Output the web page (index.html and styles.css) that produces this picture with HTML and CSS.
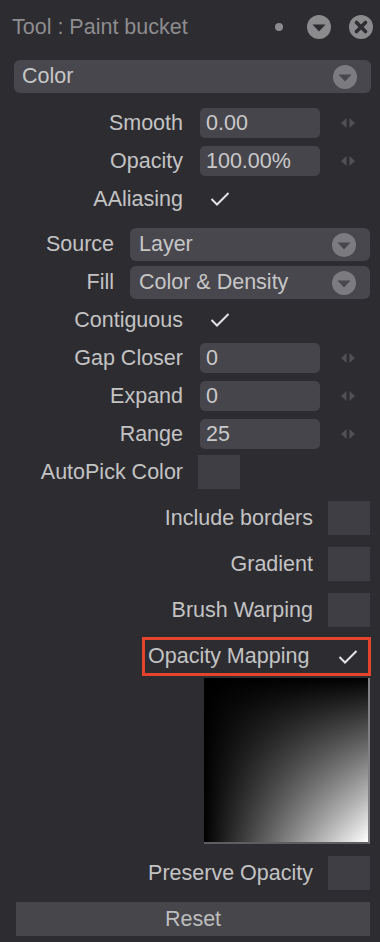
FILE: index.html
```html
<!DOCTYPE html>
<html>
<head>
<meta charset="utf-8">
<link rel="stylesheet" href="styles.css">
</head>
<body>
<div class="panel">
  <div class="header">
    <span class="title">Tool : Paint bucket</span>
    <span class="dot"></span>
    <svg class="hicon" width="24" height="24" viewBox="0 0 24 24"><circle cx="12" cy="12" r="12" fill="#8b8b8d"/><path d="M5.5 9.5 H18.5 L12 16.5 Z" fill="#2d2c31"/></svg>
    <svg class="hicon close" width="24" height="24" viewBox="0 0 24 24"><circle cx="12" cy="12" r="12" fill="#8b8b8d"/><path d="M7.5 7.5 L16.5 16.5 M16.5 7.5 L7.5 16.5" stroke="#2d2c31" stroke-width="3.6" stroke-linecap="round"/></svg>
  </div>

  <div class="select main-select">
    <span>Color</span>
    <svg class="sicon" width="24" height="24" viewBox="0 0 24 24"><circle cx="12" cy="12" r="12" fill="#7c7b7f"/><path d="M5.5 9.5 H18.5 L12 16.5 Z" fill="#48474d"/></svg>
  </div>

  <div class="grid g1">
    <span class="label">Smooth</span>
    <div class="field">0.00</div>
    <svg class="arrows" width="16" height="12" viewBox="0 0 16 12"><path d="M1 6 L6.5 1 V11 Z M15 6 L9.5 1 V11 Z" fill="#515055"/></svg>

    <span class="label">Opacity</span>
    <div class="field">100.00%</div>
    <svg class="arrows" width="16" height="12" viewBox="0 0 16 12"><path d="M1 6 L6.5 1 V11 Z M15 6 L9.5 1 V11 Z" fill="#515055"/></svg>

    <span class="label">AAliasing</span>
    <div class="checkcell"><svg width="20" height="16" viewBox="0 0 20 16"><path d="M1.5 8 L7 13.5 L18.5 2" fill="none" stroke="#e4e4e4" stroke-width="2"/></svg></div>
    <span></span>
  </div>

  <div class="grid g2">
    <span class="label">Source</span>
    <div class="select"><span>Layer</span><svg class="sicon" width="24" height="24" viewBox="0 0 24 24"><circle cx="12" cy="12" r="12" fill="#7c7b7f"/><path d="M5.5 9.5 H18.5 L12 16.5 Z" fill="#48474d"/></svg></div>
    <span class="label">Fill</span>
    <div class="select"><span>Color &amp; Density</span><svg class="sicon" width="24" height="24" viewBox="0 0 24 24"><circle cx="12" cy="12" r="12" fill="#7c7b7f"/><path d="M5.5 9.5 H18.5 L12 16.5 Z" fill="#48474d"/></svg></div>
  </div>

  <div class="grid g3">
    <span class="label">Contiguous</span>
    <div class="checkcell"><svg width="20" height="16" viewBox="0 0 20 16"><path d="M1.5 8 L7 13.5 L18.5 2" fill="none" stroke="#e4e4e4" stroke-width="2"/></svg></div>
    <span></span>

    <span class="label">Gap Closer</span>
    <div class="field">0</div>
    <svg class="arrows" width="16" height="12" viewBox="0 0 16 12"><path d="M1 6 L6.5 1 V11 Z M15 6 L9.5 1 V11 Z" fill="#515055"/></svg>

    <span class="label">Expand</span>
    <div class="field">0</div>
    <svg class="arrows" width="16" height="12" viewBox="0 0 16 12"><path d="M1 6 L6.5 1 V11 Z M15 6 L9.5 1 V11 Z" fill="#515055"/></svg>

    <span class="label">Range</span>
    <div class="field">25</div>
    <svg class="arrows" width="16" height="12" viewBox="0 0 16 12"><path d="M1 6 L6.5 1 V11 Z M15 6 L9.5 1 V11 Z" fill="#515055"/></svg>

    <span class="label">AutoPick Color</span>
    <div class="box autopick"></div>
    <span></span>
  </div>

  <div class="right-group">
    <div class="rrow"><span class="label">Include borders</span><div class="box"></div></div>
    <div class="rrow"><span class="label">Gradient</span><div class="box"></div></div>
    <div class="rrow"><span class="label">Brush Warping</span><div class="box"></div></div>
  </div>

  <div class="highlight">
    <span class="label">Opacity Mapping</span>
    <svg width="20" height="16" viewBox="0 0 20 16"><path d="M1.5 8 L7 13.5 L18.5 2" fill="none" stroke="#e4e4e4" stroke-width="2"/></svg>
  </div>

  <div class="gradient-wrap"><div class="gradient"></div></div>

  <div class="rrow preserve"><span class="label">Preserve Opacity</span><div class="box"></div></div>

  <div class="reset">Reset</div>
</div>
</body>
</html>
```
FILE: styles.css
```css
html, body {
  margin: 0;
  padding: 0;
  background: #2d2c31;
}
body {
  width: 380px;
  height: 942px;
  overflow: hidden;
  font-family: "Liberation Sans", Arial, sans-serif;
  font-size: 21.5px;
  color: #c3c3c4;
}
.panel {
  display: flex;
  flex-direction: column;
}
.header {
  height: 54px;
  display: flex;
  align-items: center;
  padding: 0 7px 0 12px;
}
.title {
  color: #8d8d8f;
}
.dot {
  width: 8px;
  height: 8px;
  border-radius: 50%;
  background: #8b8b8d;
  margin-left: auto;
  margin-right: 24px;
}
.hicon.close {
  margin-left: 18px;
}
.select {
  height: 33px;
  border-radius: 6px;
  background: #48474d;
  display: flex;
  align-items: center;
  justify-content: space-between;
  padding: 0 14px 0 9px;
  color: #c6c6c7;
}
.sicon { display: block; }
.main-select {
  margin: 6px 9px 0 14px;
  padding-left: 8px;
}
.grid {
  display: grid;
  column-gap: 17px;
  align-items: center;
}
.g1, .g3 {
  grid-template-columns: 183px 120px 16px;
  grid-auto-rows: 30px;
  row-gap: 8px;
}
.g1 .arrows, .g3 .arrows { margin-left: 3px; }
.g1 { margin-top: 15px; }
.g2 {
  grid-template-columns: 114px 240px;
  column-gap: 16px;
  grid-auto-rows: 33px;
  row-gap: 5px;
  margin-top: 14px;
}
.g3 { margin-top: 6px; }
.g3 .autopick { margin-left: -2px; }
.label {
  text-align: right;
  white-space: nowrap;
}
.field {
  height: 30px;
  border-radius: 5px;
  background: #46454b;
  display: flex;
  align-items: center;
  padding-left: 6px;
  color: #c9c9ca;
}
.checkcell {
  display: flex;
  align-items: center;
  padding-left: 10px;
}
.checkcell svg { display: block; }
.box {
  width: 42px;
  height: 34px;
  background: #3f3e44;
}
.right-group {
  display: flex;
  flex-direction: column;
  gap: 12px;
  margin-top: 14px;
}
.rrow {
  display: flex;
  justify-content: flex-end;
  align-items: center;
  gap: 15px;
  padding-right: 10px;
}
.highlight {
  margin: 10px 9px 0 142px;
  height: 39px;
  box-sizing: border-box;
  border: 3.5px solid #e4432c;
  display: flex;
  align-items: center;
  justify-content: space-between;
  padding: 0 10px 0 3px;
}
.highlight svg { display: block; }
.gradient-wrap {
  display: flex;
  justify-content: flex-end;
  padding-right: 10px;
  margin-top: 2px;
}
.gradient {
  width: 164px;
  height: 164px;
  border-right: 2px solid #808083;
  border-bottom: 2px solid #5e5d62;
  background:
    linear-gradient(to bottom, #000 0%, rgba(0,0,0,0) 100%),
    linear-gradient(to right, #000 0%, #fff 100%);
}
.preserve {
  margin-top: 12px;
}
.reset {
  margin: 12px 10px 0 16px;
  height: 34px;
  background: #47464b;
  display: flex;
  align-items: center;
  justify-content: center;
  color: #bdbdbe;
}
```
